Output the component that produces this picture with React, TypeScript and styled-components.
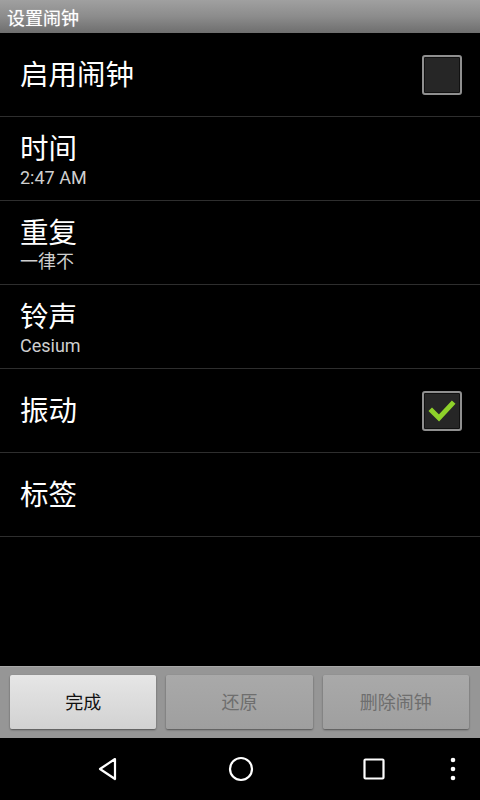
import React, { FC } from 'react';
import styled, { createGlobalStyle } from 'styled-components';

const GlobalStyle = createGlobalStyle`
  html, body {
    margin: 0;
    padding: 0;
    background: #000;
  }
  body {
    font-family: Roboto, "Noto Sans CJK SC", sans-serif;
  }
`;

const Screen = styled.div`
  width: 480px;
  height: 800px;
  display: flex;
  flex-direction: column;
  background: #000;
  overflow: hidden;
`;

const TitleBar = styled.div`
  height: 33px;
  display: flex;
  align-items: center;
  padding-left: 7px;
  background: linear-gradient(#a0a0a0, #8c8c8c 50%, #6e6e6e);
  color: #fff;
  font-size: 18px;
  text-shadow: 0 0 1px rgba(255, 255, 255, 0.6);
  box-sizing: border-box;
`;

const List = styled.div`
  flex: 1;
  display: flex;
  flex-direction: column;
`;

const Row = styled.div`
  height: 83px;
  display: flex;
  align-items: center;
  justify-content: space-between;
  padding: 0 18px 0 20px;
  border-bottom: 1px solid #2e2e2e;
`;

const Labels = styled.div`
  display: flex;
  flex-direction: column;
  padding-top: 3px;
`;

const Title = styled.div`
  color: #fff;
  font-size: 28.5px;
  line-height: 34px;
`;

const Summary = styled.div`
  color: #cfcfcf;
  font-size: 18px;
  line-height: 20px;
  margin-top: 1px;
`;

const Box = styled.div`
  width: 40px;
  height: 40px;
  box-sizing: border-box;
  border: 2px solid #8f8f8f;
  border-radius: 3px;
  background: #262626;
  box-shadow: inset 0 0 0 1px #111;
  display: flex;
  align-items: center;
  justify-content: center;
`;

const ButtonBar = styled.div`
  height: 72px;
  display: grid;
  grid-template-columns: repeat(3, 1fr);
  gap: 10px;
  padding: 8px 11px 9px 10px;
  box-sizing: border-box;
  background: #969696;
  border-top: 1px solid #a8a8a8;
`;

const Button = styled.div<{ $enabled?: boolean }>`
  display: flex;
  align-items: center;
  justify-content: center;
  padding-bottom: 2px;
  font-size: 18px;
  color: ${p => (p.$enabled ? '#111' : '#6e6e6e')};
  background: ${p =>
    p.$enabled
      ? 'linear-gradient(#e6e6e6, #d2d2d2)'
      : 'linear-gradient(#a9a9a9, #9f9f9f)'};
  border-radius: 2px;
  box-shadow: 0 1px 2px rgba(0, 0, 0, 0.45);
`;

const NavBar = styled.div`
  height: 62px;
  display: grid;
  grid-template-columns: 41px repeat(3, 133px) 26px;
  align-items: center;
  justify-items: center;
  background: #000;
`;

const Check: FC<{ checked?: boolean }> = ({ checked }) => (
  <Box>
    {checked && (
      <svg width="28" height="24" viewBox="0 0 28 24">
        <path d="M4 12 L11 19 L24 5" fill="none" stroke="#8ed12a" strokeWidth="5" strokeLinecap="square" />
      </svg>
    )}
  </Box>
);

type Item = { title: string; summary?: string; check?: 'on' | 'off' };

const ITEMS: Item[] = [
  { title: '启用闹钟', check: 'off' },
  { title: '时间', summary: '2:47 AM' },
  { title: '重复', summary: '一律不' },
  { title: '铃声', summary: 'Cesium' },
  { title: '振动', check: 'on' },
  { title: '标签' },
];

export default function App() {
  return (
    <Screen>
      <GlobalStyle />
      <TitleBar>设置闹钟</TitleBar>
      <List>
        {ITEMS.map(item => (
          <Row key={item.title}>
            <Labels>
              <Title>{item.title}</Title>
              {item.summary && <Summary>{item.summary}</Summary>}
            </Labels>
            {item.check && <Check checked={item.check === 'on'} />}
          </Row>
        ))}
      </List>
      <ButtonBar>
        <Button $enabled>完成</Button>
        <Button>还原</Button>
        <Button>删除闹钟</Button>
      </ButtonBar>
      <NavBar>
        <span />
        <svg width="26" height="26" viewBox="0 0 26 26">
          <path d="M20 3 L5 13 L20 23 Z" fill="none" stroke="#fff" strokeWidth="2.2" strokeLinejoin="round" />
        </svg>
        <svg width="26" height="26" viewBox="0 0 26 26">
          <circle cx="13" cy="13" r="11" fill="none" stroke="#fff" strokeWidth="2.2" />
        </svg>
        <svg width="26" height="26" viewBox="0 0 26 26">
          <rect x="3.5" y="3.5" width="19" height="19" rx="1" fill="none" stroke="#fff" strokeWidth="2.2" />
        </svg>
        <svg width="8" height="26" viewBox="0 0 8 26">
          <circle cx="4" cy="4" r="2.3" fill="#fff" />
          <circle cx="4" cy="13" r="2.3" fill="#fff" />
          <circle cx="4" cy="22" r="2.3" fill="#fff" />
        </svg>
      </NavBar>
    </Screen>
  );
}
